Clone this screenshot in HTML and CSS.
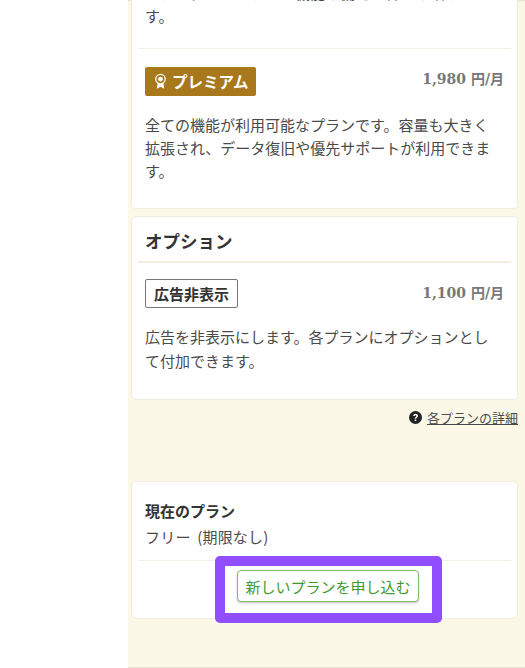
FILE: index.html
```html
<!DOCTYPE html>
<html lang="ja">
<head>
  <meta charset="UTF-8" />
  <meta name="viewport" content="width=device-width, initial-scale=1" />
  <title>プラン</title>
  <link rel="stylesheet" href="styles.css">
</head>
<body>

  <div class="side"></div>

  <div class="main">
    <div class="top-shadow"></div>

    <div class="card card-top">
      <p class="desc">スタンダードプランの機能を備え、容量を増やせます。</p>
      <div class="plan">
        <div class="plan-head">
          <span class="badge badge-premium">
            <svg class="medal" viewBox="0 0 16 20" width="13" height="17">
              <path d="M4.5 11.5 L3.5 19 L8 16.5 L12.5 19 L11.5 11.5" fill="#fff"/>
              <circle cx="8" cy="7" r="6.6" fill="#fff"/>
              <circle cx="8" cy="7" r="5" fill="#a8781c"/>
              <circle cx="8" cy="7" r="3" fill="#fff"/>
            </svg>
            プレミアム
          </span>
          <span class="price">1,980 円/月</span>
        </div>
        <p class="desc">全ての機能が利用可能なプランです。容量も大きく拡張され、データ復旧や優先サポートが利用できます。</p>
      </div>
    </div>

    <div class="card card-option">
      <h3 class="card-title">オプション</h3>
      <div class="plan-head">
        <span class="badge badge-option">広告非表示</span>
        <span class="price">1,100 円/月</span>
      </div>
      <p class="desc">広告を非表示にします。各プランにオプションとして付加できます。</p>
    </div>

    <div class="detail-link">
      <svg class="help" viewBox="0 0 16 16" width="13" height="13">
        <circle cx="8" cy="8" r="8" fill="#222"/>
        <path d="M5.2 6.2 C5.3 4.4 6.6 3.4 8.1 3.4 C9.8 3.4 11 4.5 11 6 C11 7.9 8.9 7.9 8.9 9.6 L7 9.6 C7 7.2 9 7.3 9 6 C9 5.5 8.6 5.1 8 5.1 C7.4 5.1 7 5.6 6.9 6.2 Z" fill="#fff"/>
        <rect x="7" y="10.5" width="1.9" height="1.9" fill="#fff"/>
      </svg>
      <a href="#">各プランの詳細</a>
    </div>

    <div class="card card-current">
      <div class="current-body">
        <div class="current-label">現在のプラン</div>
        <div class="current-value">フリー (期限なし)</div>
      </div>
      <div class="current-foot">
        <button class="apply-btn">新しいプランを申し込む</button>
      </div>
      <div class="highlight"></div>
    </div>
  </div>

</body>
</html>
```

FILE: styles.css
```css
html, body {
  margin: 0;
  padding: 0;
  height: 668px;
  overflow: hidden;
}

body {
  display: flex;
  background: #fff;
  font-family: "Noto Sans CJK JP", "Noto Sans", sans-serif;
  color: #4a4a4a;
}

.side {
  width: 128px;
  flex-shrink: 0;
}

.main {
  position: relative;
  flex: 1;
  height: 668px;
  box-sizing: border-box;
  padding: 0 7px 0 3px;
  background: #fcf8e8;
  border-bottom: 1px solid #e6e3d6;
  overflow: hidden;
}

.top-shadow {
  position: absolute;
  top: 0;
  left: 0;
  right: 0;
  height: 2px;
  background: linear-gradient(rgba(0, 0, 0, 0.1), rgba(0, 0, 0, 0));
}

/* === Cards === */
.card {
  position: relative;
  background: #fff;
  border: 1px solid #f1eee0;
  border-radius: 5px;
  padding: 0 13px;
  margin-bottom: 7px;
}

.card-top {
  margin-top: -19px;
  padding-bottom: 26px;
  border-top: none;
  border-radius: 0 0 5px 5px;
}

.desc {
  margin: 0;
  padding-right: 12px;
  font-size: 15px;
  line-height: 23.3px;
  color: #4a4a4a;
}

.plan {
  margin: 20px -7px 0;
  padding: 18px 7px 0;
  border-top: 1px solid #f3f0e2;
}

.plan-head {
  display: flex;
  align-items: center;
  justify-content: space-between;
  margin-bottom: 17px;
}

.price {
  margin-bottom: 4px;
  font-family: "DejaVu Serif", "Noto Sans CJK JP", serif;
  font-size: 14px;
  font-weight: bold;
  color: #777;
}

.badge-premium + .price {
  margin-bottom: 7px;
}

.badge {
  display: inline-flex;
  align-items: center;
  gap: 5px;
  box-sizing: border-box;
  height: 29px;
  padding: 0 8px 0 9px;
  border-radius: 2px;
  font-size: 15.5px;
  font-weight: bold;
}

.badge-premium {
  background: #a8781c;
  color: #fff;
}

.badge-option {
  background: #fff;
  border: 1px solid #777;
  color: #333;
  font-size: 15px;
  padding: 0 8px;
}

.card-title {
  margin: 0 -7px 0;
  padding: 11px 7px 8px;
  font-size: 17.5px;
  line-height: 25px;
  font-weight: bold;
  color: #333;
  border-bottom: 2px solid #f1eee0;
}

.card-option {
  padding-bottom: 27px;
}

.card-option .plan-head {
  margin-top: 16px;
}

/* === Link === */
.detail-link {
  display: flex;
  justify-content: flex-end;
  align-items: center;
  gap: 5px;
  height: 18px;
  margin-top: 8px;
  margin-bottom: 55px;
  font-size: 13px;
}

.detail-link a {
  color: #4a4a4a;
}

/* === Current plan === */
.card-current {
  height: 138px;
  box-sizing: border-box;
  margin-bottom: 0;
}

.current-body {
  padding-top: 16px;
  padding-bottom: 10px;
}

.current-label {
  margin-bottom: 1px;
  font-size: 15px;
  line-height: 25px;
  font-weight: bold;
  color: #333;
}

.current-value {
  font-size: 15px;
  line-height: 26px;
  word-spacing: 3px;
  letter-spacing: 0.2px;
  color: #4a4a4a;
}

.current-foot {
  margin: 0 -7px;
  border-top: 1px solid #f3f0e2;
  display: flex;
  justify-content: center;
  padding: 9px 0 0 7px;
}

.apply-btn {
  position: relative;
  z-index: 2;
  font-family: inherit;
  font-size: 15px;
  height: 32px;
  width: 182px;
  padding: 0;
  color: #3f9a2e;
  background: #fff;
  border: 1px solid #84bb70;
  border-radius: 4px;
  box-shadow: 0 1px 2px rgba(0, 0, 0, 0.25);
}

.highlight {
  position: absolute;
  left: 83px;
  top: 74px;
  width: 207px;
  height: 47px;
  border: 10px solid #914eff;
  border-radius: 5px;
  background: #fff;
}
```
